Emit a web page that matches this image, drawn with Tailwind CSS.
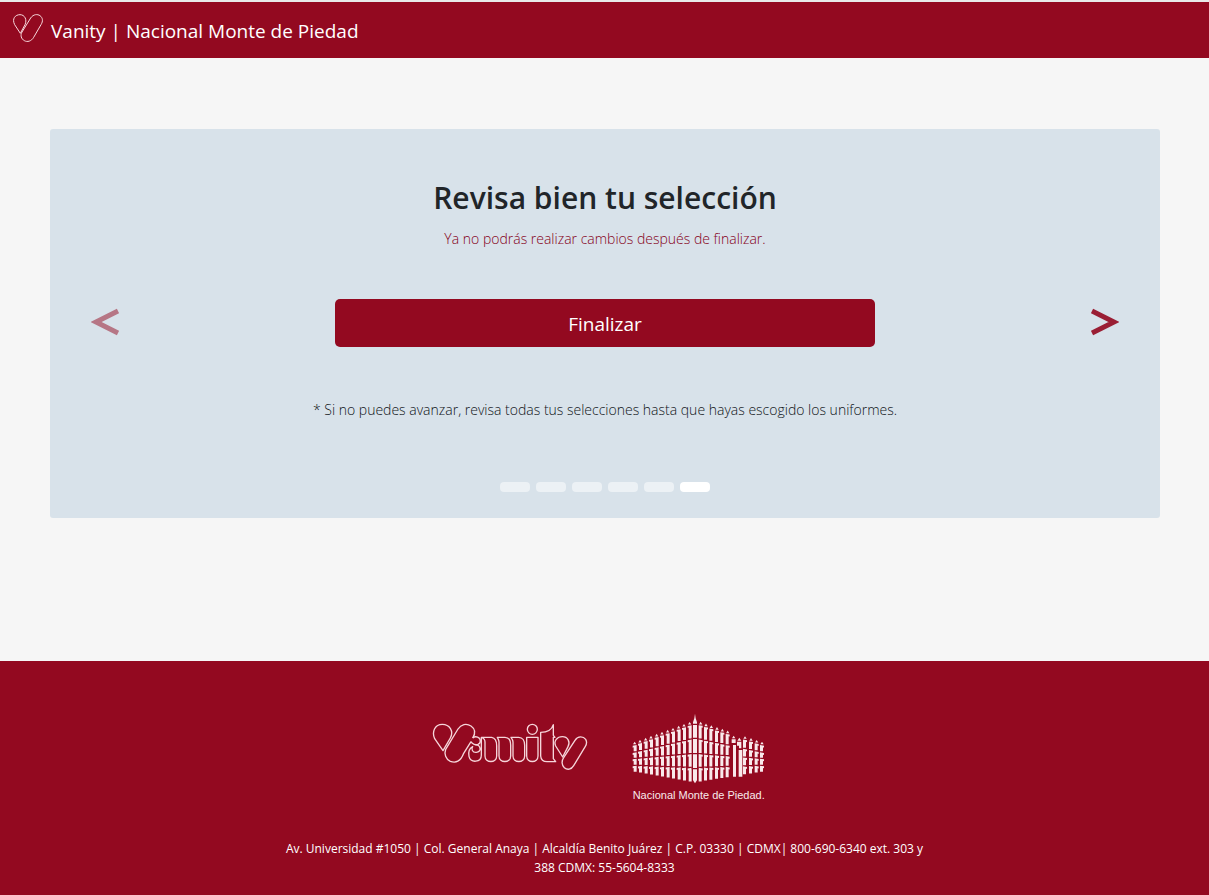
<!DOCTYPE html>
<html lang="es">
<head>
<meta charset="utf-8">
<meta name="viewport" content="width=device-width, initial-scale=1">
<title>Vanity | Nacional Monte de Piedad</title>
<script src="https://cdn.jsdelivr.net/npm/@tailwindcss/browser@4"></script>
</head>
<body class="flex min-h-screen flex-col bg-[#f6f6f6] font-['Segoe_UI','Open_Sans','Noto_Sans',sans-serif] text-[#212529]">
<header class="border-t-2 border-[#e9e9e9] bg-[#930920] px-3">
  <a href="#" class="flex h-14 items-center gap-2 text-[19px] text-white">
    <svg class="-mt-1 h-[30px] w-[31px]" viewBox="-3 0 93 90" fill="none" stroke="#f8d9dd" stroke-width="3" aria-hidden="true">
      <path d="M22 61 L5 35 C-4 17 7 5 21 5 C35 5 43 20 36 35 Z"/>
      <path d="M27 57 L53 15 C61 3 74 3 81 8 C89 14 91 24 84 35 L62 73 C55 85 43 88 34 83 C25 78 21 67 27 57Z"/>
    </svg>
    <span class="pt-0.5">Vanity | Nacional Monte de Piedad</span>
  </a>
</header>

<main class="flex-1 pt-[71px] pr-[49px] pb-[141px] pl-[50px]">
  <section class="grid grid-cols-[110px_1fr_110px] rounded-[3px] bg-[#d8e2ea]" aria-label="Selección de uniformes">
    <button type="button" aria-label="Anterior" class="flex items-center justify-center pb-1 text-[#930920]/50">
      <svg class="h-7 w-7" viewBox="0 0 28 28" fill="none" stroke="currentColor" stroke-width="5" aria-hidden="true"><path d="M27 3 L5 14 L27 25"/></svg>
    </button>
    <div class="flex flex-col items-center pt-[48px] pb-[26px] text-center">
      <h1 class="text-[30px] leading-[42px] font-semibold">Revisa bien tu selección</h1>
      <p class="mt-2 text-[14px] leading-6 font-light text-[#850018]">Ya no podrás realizar cambios después de finalizar.</p>
      <button type="button" class="mt-12 h-12 w-full max-w-[540px] rounded-[5px] bg-[#930920] pt-0.5 text-[19px] text-white">Finalizar</button>
      <p class="mt-[51px] text-[14px] leading-6 font-light text-[#101418]">* Si no puedes avanzar, revisa todas tus selecciones hasta que hayas escogido los uniformes.</p>
      <div class="mt-[60px] flex gap-1.5">
        <button type="button" aria-label="Paso 1" class="h-2.5 w-[30px] rounded bg-white/50"></button>
        <button type="button" aria-label="Paso 2" class="h-2.5 w-[30px] rounded bg-white/50"></button>
        <button type="button" aria-label="Paso 3" class="h-2.5 w-[30px] rounded bg-white/50"></button>
        <button type="button" aria-label="Paso 4" class="h-2.5 w-[30px] rounded bg-white/50"></button>
        <button type="button" aria-label="Paso 5" class="h-2.5 w-[30px] rounded bg-white/50"></button>
        <button type="button" aria-label="Paso 6" class="h-2.5 w-[30px] rounded bg-white"></button>
      </div>
    </div>
    <button type="button" aria-label="Siguiente" class="flex items-center justify-center pb-1 text-[#930920]/90">
      <svg class="h-7 w-7" viewBox="0 0 28 28" fill="none" stroke="currentColor" stroke-width="5" aria-hidden="true"><path d="M1 3 L23 14 L1 25"/></svg>
    </button>
  </section>
</main>

<footer class="flex flex-col items-center bg-[#930920] px-3 pt-[52px] pb-[18px] text-white">
  <div class="flex gap-[44px] pr-2.5">
    <svg class="mt-[9px] h-12 w-[156px]" viewBox="21 36 468 144" fill="none" stroke="#f6d5da" stroke-width="4" stroke-linejoin="round" role="img" aria-label="Vanity">
      <path d="M54 122 L29 86 C20 66 29 43 52 43 C74 43 87 64 76 84 Z"/>
      <path d="M138 95 L116 130 C107 155 92 160 76 154 C62 147 57 132 62 118 L99 57 C108 43 124 39 138 48 C151 57 152 70 143 84"/>
      <path d="M143 84 C152 76 166 82 166 93 C166 104 152 108 142 100 L138 95"/>
      <path d="M150 104 C168 104 171 126 154 127 C142 128 138 117 143 110 C131 116 130 128 132 139 C137 160 169 158 169 136 V82 H200 C212 84 215 95 215 107 V138 C215 160 180 160 180 138 V96 C180 90 176 84 169 82"/>
      <path d="M217 82 H240 C252 82 257 93 257 106 V138 C257 160 222 160 222 138 V96 C222 90 219 86 217 82 Z"/>
      <path d="M258 82 H281 C293 82 299 93 299 106 V138 C299 160 264 160 264 138 V96 C264 90 261 86 258 82 Z"/>
      <circle cx="322" cy="58" r="15"/>
      <path d="M305 82 H339 V138 C339 160 305 160 305 138 Z"/>
      <path d="M385 44 C381 58 369 67 347 67 V138 C348 151 356 155 366 155 H392 L385 146 V82 H390 L385 76 Z"/>
      <path d="M413 141 L392 108 C385 92 397 80 412 80 C428 80 437 95 429 110 Z"/>
      <path d="M416 143 L450 91 C459 77 475 79 482 88 C486 95 486 101 481 109 L446 167 C439 179 427 181 418 173 C410 166 409 153 416 143 Z"/>
    </svg>
    <svg class="h-[91px] w-[135px]" viewBox="22 16 405 273" fill="#f9e9eb" role="img" aria-label="Nacional Monte de Piedad">
      <g id="facade"></g>
      <path d="M211 18 L213 32 L217 44 V218 L211 227 L205 218 V44 L209 32 Z"/>
      <path d="M201 50 H221 M201 92 H221 M201 138 H221 M201 183 H221" fill="none" stroke="#930920" stroke-width="4"/>
      <text x="24" y="275" class="font-['Liberation_Sans_Narrow','Liberation_Sans',sans-serif] text-[33px]">Nacional Monte de Piedad.</text>
    </svg>
  </div>
  <address class="mt-[35px] max-w-[640px] text-center text-[12px] leading-[19px] not-italic">Av. Universidad #1050 | Col. General Anaya | Alcaldía Benito Juárez | C.P. 03330 | CDMX| 800-690-6340 ext. 303 y 388 CDMX: 55-5604-8333</address>
</footer>
<script>
  // Columns of both wings, four storeys each, converging towards the outer ends.
  const outer = [112, 134, 153, 174, 195];
  const inner = [47, 92, 138, 181, 227];
  const columns = [30, 46, 63, 79, 96, 112, 129, 145, 162, 178, 195, 228, 244, 260, 277, 293, 309, 361, 379, 396, 412];
  let d = '';
  for (const x of columns) {
    const side = x < 211 ? 1 : -1;
    const t = 1 - Math.abs(x - 211) / (side === 1 ? 181 : 201);
    for (let f = 0; f < 4; f++) {
      const a = outer[f] + (inner[f] - outer[f]) * t;
      const b = outer[f + 1] + (inner[f + 1] - outer[f + 1]) * t;
      d += `M${x - 6 * side} ${a + 2}L${x + 6 * side} ${a}V${b - 3}H${x - 3 * side}V${a + 7}L${x - 6 * side} ${a + 8}Z`;
      if (f === 0) d += `M${x - 5} ${a - 2}L${x} ${a - 10}L${x + 5} ${a - 2}Z`;
    }
  }
  // Portal: two tall posts under a short lintel.
  d += 'M322 92L327 84L332 92ZM321 95H333V106H321ZM338 99L344 90L350 99ZM337 102H350V122H343V114H337ZM325 112H334V207H325ZM342 127H353V207H342Z';
  document.getElementById('facade').innerHTML = `<path d="${d}"/>`;
</script>
</body>
</html>
